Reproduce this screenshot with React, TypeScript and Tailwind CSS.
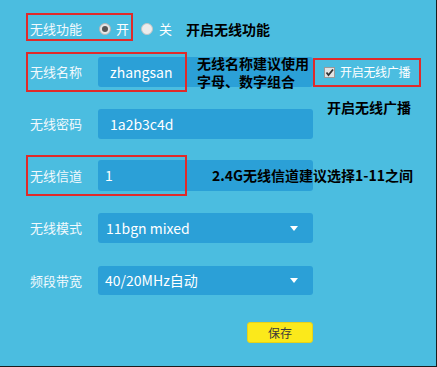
const font = "font-['Noto_Sans_CJK_SC','Liberation_Sans',sans-serif]";

const Label = ({ text }: { text: string }) => (
  <div className="w-[68px] shrink-0 text-[13px] text-[#f2f9fd]">{text}</div>
);

const Field = ({ value, pad = "pl-[12px]", select = false, h = "h-[30px]" }: { value: string; pad?: string; select?: boolean; h?: string }) => (
  <div className={`w-[215px] ${h} rounded-[3px] bg-[#2ba0d7] flex items-center justify-between ${pad} pr-[15px] text-[14px] text-white`}>
    <span>{value}</span>
    {select && (
      <span className="w-0 h-0 border-l-[4.5px] border-r-[4.5px] border-t-[5px] border-l-transparent border-r-transparent border-t-white" />
    )}
  </div>
);

const App = () => {
  return (
    <div className={`relative w-[437px] h-[367px] bg-[#4bbde0] border-r border-b border-[#1c1c1c] ${font} pl-[30px] flex flex-col`}>
      {/* row 1 */}
      <div className="mt-[14px] h-[30px] flex items-center">
        <Label text="无线功能" />
        <div className="ml-[1px] flex items-center gap-[5px]">
          <span className="w-[12px] h-[12px] rounded-full bg-[#e6e6e6] border border-[#b5b5b5] flex items-center justify-center">
            <span className="w-[6px] h-[6px] rounded-full bg-[#555]" />
          </span>
          <span className="text-[13px] text-white">开</span>
        </div>
        <div className="ml-[12px] flex items-center gap-[6px]">
          <span className="w-[12px] h-[12px] rounded-full bg-[#ececec] border border-[#c4c4c4]" />
          <span className="text-[13px] text-white">关</span>
        </div>
        <div className="ml-[14px] text-[14px] font-bold text-black">开启无线功能</div>
      </div>

      {/* row 2 */}
      <div className="mt-[13px] h-[30px] flex items-center">
        <Label text="无线名称" />
        <Field value="zhangsan" />
        <div className="ml-[11px] flex items-center gap-[5px]">
          <span className="w-[11px] h-[11px] bg-[#e4e4e4] border border-[#9a9a9a] flex items-center justify-center">
            <svg width="9" height="9" viewBox="0 0 9 9">
              <path d="M1.5 4.5 L3.5 7 L8 1.5" stroke="#333" strokeWidth="1.8" fill="none" />
            </svg>
          </span>
          <span className="text-[12px] text-white tracking-[-0.3px]">开启无线广播</span>
        </div>
      </div>

      {/* row 3 */}
      <div className="mt-[22px] h-[30px] flex items-center">
        <Label text="无线密码" />
        <Field value="1a2b3c4d" />
      </div>

      {/* row 4 */}
      <div className="mt-[21px] h-[31px] flex items-center">
        <Label text="无线信道" />
        <Field value="1" pad="pl-[7px]" h="h-[31px]" />
      </div>

      {/* row 5 */}
      <div className="mt-[22px] h-[30px] flex items-center">
        <Label text="无线模式" />
        <Field value="11bgn mixed" pad="pl-[8px]" select />
      </div>

      {/* row 6 */}
      <div className="mt-[23px] h-[29px] flex items-center">
        <Label text="频段带宽" />
        <Field value="40/20MHz自动" pad="pl-[7px]" select h="h-[29px]" />
      </div>

      <div className="mt-[27px] ml-[217px] w-[66px] h-[21px] rounded-[3px] bg-[#fbe91b] border border-[#e6d21a] flex items-center justify-center text-[12px] text-[#3a3a3a]">
        保存
      </div>

      {/* annotations */}
      <div className="absolute left-[197px] top-[54px] text-[14px] font-bold text-black leading-[18px]">
        无线名称建议使用<br />字母、数字组合
      </div>
      <div className="absolute left-[327px] top-[97px] text-[14px] font-bold text-black">开启无线广播</div>
      <div className="absolute left-[212px] top-[165px] text-[14px] font-bold text-black">2.4G无线信道建议选择1-11之间</div>

      <div className="absolute left-[26px] top-[13px] w-[107px] h-[28px] border-2 border-[#e02a2a]" />
      <div className="absolute left-[26px] top-[52px] w-[161px] h-[40px] border-2 border-[#e02a2a]" />
      <div className="absolute left-[313px] top-[58px] w-[108px] h-[29px] border-2 border-[#e02a2a]" />
      <div className="absolute left-[26px] top-[155px] w-[161px] h-[41px] border-2 border-[#e02a2a]" />
    </div>
  );
};

export default App;
